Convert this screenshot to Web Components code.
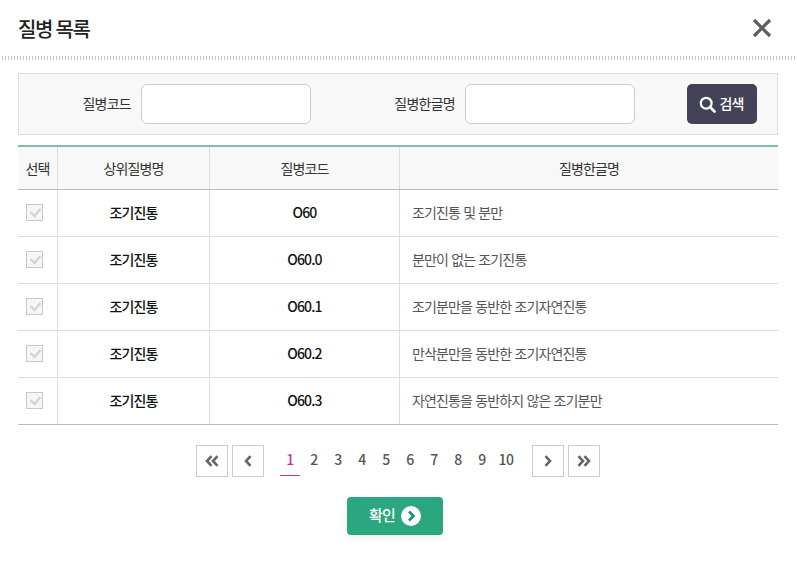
<!DOCTYPE html>
<html lang="ko">
<head>
<meta charset="utf-8">
<title>질병 목록</title>
<style>
    html, body { margin: 0; padding: 0; background: #fff; }
    body { font-family: "Noto Sans CJK KR", "Noto Sans", sans-serif; color: #333; }
</style>
</head>
<body>
<disease-dialog heading="질병 목록">
    <search-bar></search-bar>
    <disease-table>
        <disease-row parent="조기진통" code="O60" name="조기진통 및 분만"></disease-row>
        <disease-row parent="조기진통" code="O60.0" name="분만이 없는 조기진통"></disease-row>
        <disease-row parent="조기진통" code="O60.1" name="조기분만을 동반한 조기자연진통"></disease-row>
        <disease-row parent="조기진통" code="O60.2" name="만삭분만을 동반한 조기자연진통"></disease-row>
        <disease-row parent="조기진통" code="O60.3" name="자연진통을 동반하지 않은 조기분만"></disease-row>
    </disease-table>
    <page-nav current="1" total="10"></page-nav>
    <ok-button>확인</ok-button>
</disease-dialog>

<template id="disease-dialog-template">
    <style>
        :host { display: block; width: 797px; height: 565px; box-sizing: border-box; overflow: hidden; }
        .head {
            height: 56px;
            padding: 0 18px;
            box-sizing: border-box;
            display: flex;
            justify-content: space-between;
            align-items: center;
        }
        h1 { margin: 0; font-size: 20px; font-weight: 500; letter-spacing: -1.3px; word-spacing: -1px; color: #222; }
        button { border: 0; padding: 0; margin: 0 7px 0 0; background: none; width: 20px; height: 20px; display: block; }
        .dots {
            height: 4px;
            background: repeating-linear-gradient(to right, #c4c4c4 0 1px, transparent 1px 3px);
            margin-bottom: 13px;
            margin-left: 2px;
        }
        .body { padding: 0 19px 0 18px; }
    </style>
    <div class="head">
        <h1></h1>
        <button aria-label="닫기">
            <svg width="20" height="20" viewBox="0 0 20 20"><path d="M2 2L18 18M18 2L2 18" stroke="#5f5f5f" stroke-width="3.2" fill="none"/></svg>
        </button>
    </div>
    <div class="dots"></div>
    <div class="body"><slot></slot></div>
</template>

<template id="search-bar-template">
    <style>
        :host { display: block; }
        .box {
            height: 62px;
            box-sizing: border-box;
            border: 1px solid #ddd;
            background: #f8f8f8;
            display: flex;
            align-items: center;
            font-size: 14px;
            letter-spacing: -0.75px;
            color: #333;
        }
        label { display: flex; align-items: center; justify-content: flex-end; gap: 10px; }
        label.a { width: 292px; }
        label.b { width: 324px; }
        label span { padding-bottom: 2px; }
        input {
            width: 170px;
            height: 40px;
            box-sizing: border-box;
            border: 1px solid #ccc;
            border-radius: 6px;
            background: #fff;
            margin: 0;
        }
        button {
            margin-left: 52px;
            width: 70px;
            height: 40px;
            border: 0;
            border-radius: 5px;
            background: #434156;
            color: #fff;
            font: 500 14px "Noto Sans CJK KR", sans-serif;
            letter-spacing: -0.8px;
            display: flex;
            align-items: center;
            justify-content: center;
            gap: 3px;
            padding: 0 1px 0 0;
        }
        button span { padding-bottom: 3px; }
    </style>
    <div class="box">
        <label class="a"><span>질병코드</span> <input type="text"></label>
        <label class="b"><span>질병한글명</span> <input type="text"></label>
        <button>
            <svg width="17" height="17" viewBox="0 0 17 17"><circle cx="7.2" cy="7.2" r="5.4" fill="none" stroke="#fff" stroke-width="2.2"/><path d="M11 11L15.5 15.5" stroke="#fff" stroke-width="2.6" stroke-linecap="round"/></svg>
            <span>검색</span>
        </button>
    </div>
</template>

<template id="disease-table-template">
    <style>
        :host { display: block; margin-top: 10px; border-top: 2px solid #7cbcb4; border-bottom: 1px solid #bbb; }
        .row {
            display: grid;
            grid-template-columns: 40px 152px 190px 1fr;
            height: 42px;
            background: #f8f8f8;
            border-bottom: 1px solid #bbb;
            font-size: 14px;
            letter-spacing: -0.9px;
            color: #333;
        }
        .row div { display: flex; align-items: center; justify-content: center; border-right: 1px solid #ddd; padding-bottom: 1px; }
        .row div:last-child { border-right: 0; }
    </style>
    <div class="row">
        <div>선택</div><div>상위질병명</div><div>질병코드</div><div>질병한글명</div>
    </div>
    <slot></slot>
</template>

<template id="disease-row-template">
    <style>
        :host { display: grid; grid-template-columns: 40px 152px 190px 1fr; height: 46px; border-bottom: 1px solid #ddd; }
        :host(:last-child) { border-bottom: 0; }
        div { display: flex; align-items: center; justify-content: center; border-right: 1px solid #ddd; font-size: 14px; letter-spacing: -0.85px; padding-bottom: 3px; }
        .strong { font-weight: 500; color: #111; }
        .name { justify-content: flex-start; padding-left: 12px; border-right: 0; color: #555; }
        .check { justify-content: flex-start; padding-left: 8px; padding-bottom: 1px; }
        svg { display: block; }
    </style>
    <div class="check">
        <svg width="17" height="17" viewBox="0 0 17 17"><rect x=".5" y=".5" width="16" height="16" fill="#f6f6f6" stroke="#c8c8c8"/><path d="M4.5 8L8.5 12L14.5 5" fill="none" stroke="#d4d4d4" stroke-width="2.4"/></svg>
    </div>
    <div class="strong parent"></div>
    <div class="strong code"></div>
    <div class="name"></div>
</template>

<template id="page-nav-template">
    <style>
        :host { display: flex; justify-content: center; align-items: flex-start; margin-top: 20px; height: 32px; }
        a.box {
            width: 32px;
            height: 32px;
            box-sizing: border-box;
            border: 1px solid #ccc;
            background: #fff;
            display: flex;
            align-items: center;
            justify-content: center;
            margin-right: 4px;
        }
        a.box:last-child { margin-right: 0; }
        .nums { display: flex; margin: 0 14px 0 10px; height: 32px; }
        .nums a {
            width: 24px;
            height: 31px;
            box-sizing: border-box;
            padding-bottom: 3px;
            display: flex;
            align-items: center;
            justify-content: center;
            font-size: 14px;
            font-weight: 500;
            letter-spacing: -0.5px;
            color: #555;
            position: relative;
        }
        .nums a.on { color: #c6359b; }
        .nums a.on::after { content: ""; position: absolute; left: 2px; right: 2px; bottom: 0; height: 1px; background: #c6359b; }
    </style>
    <a class="box"><svg width="14" height="12" viewBox="0 0 14 12"><path d="M6.5 1.2L2 6L6.5 10.8M12.5 1.2L8 6L12.5 10.8" fill="none" stroke="#666" stroke-width="2.6"/></svg></a>
    <a class="box"><svg width="8" height="12" viewBox="0 0 8 12"><path d="M6.5 1.2L2 6L6.5 10.8" fill="none" stroke="#666" stroke-width="2.6"/></svg></a>
    <div class="nums"></div>
    <a class="box"><svg width="8" height="12" viewBox="0 0 8 12"><path d="M1.5 1.2L6 6L1.5 10.8" fill="none" stroke="#666" stroke-width="2.6"/></svg></a>
    <a class="box"><svg width="14" height="12" viewBox="0 0 14 12"><path d="M1.5 1.2L6 6L1.5 10.8M7.5 1.2L12 6L7.5 10.8" fill="none" stroke="#666" stroke-width="2.6"/></svg></a>
</template>

<template id="ok-button-template">
    <style>
        :host { display: flex; justify-content: center; margin-top: 20px; padding-right: 6px; }
        button {
            width: 96px;
            height: 38px;
            border: 0;
            border-radius: 4px;
            background: #2ba77f;
            box-shadow: 0 3px 8px rgba(0, 0, 0, .06);
            color: #fff;
            font: 500 15px "Noto Sans CJK KR", sans-serif;
            letter-spacing: -0.8px;
            display: flex;
            align-items: center;
            justify-content: center;
            gap: 6px;
            padding: 0;
        }
        span { padding-bottom: 3px; }
    </style>
    <button>
        <span><slot></slot></span>
        <svg width="20" height="20" viewBox="0 0 20 20"><circle cx="10" cy="10" r="10" fill="#fff"/><path d="M8 5.5L12.5 10L8 14.5" fill="none" stroke="#12907a" stroke-width="2.6"/></svg>
    </button>
</template>

<script type="module">
    function stamp(el, id) {
        const clone = document.getElementById(id).content.cloneNode(true);
        el.attachShadow({ mode: "open" }).append(clone);
        return el.shadowRoot;
    }

    customElements.define("disease-dialog", class extends HTMLElement {
        constructor() {
            super();
            stamp(this, "disease-dialog-template").querySelector("h1").textContent = this.getAttribute("heading");
        }
    });

    customElements.define("search-bar", class extends HTMLElement {
        constructor() {
            super();
            stamp(this, "search-bar-template");
        }
    });

    customElements.define("disease-table", class extends HTMLElement {
        constructor() {
            super();
            stamp(this, "disease-table-template");
        }
    });

    customElements.define("disease-row", class extends HTMLElement {
        constructor() {
            super();
            const root = stamp(this, "disease-row-template");
            root.querySelector(".parent").textContent = this.getAttribute("parent");
            root.querySelector(".code").textContent = this.getAttribute("code");
            root.querySelector(".name").textContent = this.getAttribute("name");
        }
    });

    customElements.define("page-nav", class extends HTMLElement {
        constructor() {
            super();
            const root = stamp(this, "page-nav-template");
            const nums = root.querySelector(".nums");
            const current = Number(this.getAttribute("current"));
            for (let i = 1; i <= Number(this.getAttribute("total")); i++) {
                const a = document.createElement("a");
                a.textContent = i;
                if (i === current) a.className = "on";
                nums.append(a);
            }
        }
    });

    customElements.define("ok-button", class extends HTMLElement {
        constructor() {
            super();
            stamp(this, "ok-button-template");
        }
    });
</script>
</body>
</html>
